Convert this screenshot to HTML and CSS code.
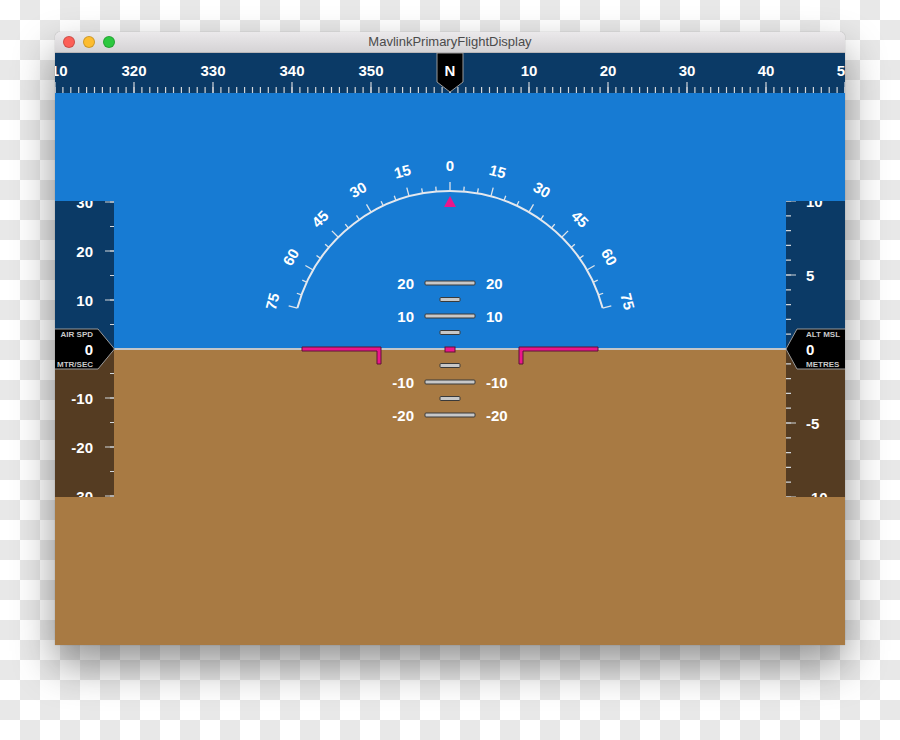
FILE: index.html
```html
<!DOCTYPE html>
<html>
<head>
<meta charset="utf-8">
<title>MavlinkPrimaryFlightDisplay</title>
<link rel="stylesheet" href="styles.css">
</head>
<body>
<div class="window">
  <div class="titlebar">
    <div class="lights">
      <span class="light red"></span>
      <span class="light yellow"></span>
      <span class="light green"></span>
    </div>
    <div class="title">MavlinkPrimaryFlightDisplay</div>
    <div></div>
  </div>
  <div class="pfd">
    <svg width="790" height="592" viewBox="55 53 790 592" xmlns="http://www.w3.org/2000/svg">
      <defs>
        <clipPath id="clipSpd"><rect x="55" y="201" width="59" height="296"/></clipPath>
        <clipPath id="clipAlt"><rect x="786" y="201" width="59" height="296"/></clipPath>
        <clipPath id="clipHdg"><rect x="55" y="53" width="790" height="40"/></clipPath>
        <line id="rollMinor" x1="450" y1="191" x2="450" y2="186"/>
        <line id="rollMajor" x1="450" y1="191" x2="450" y2="182"/>
      </defs>

      <!-- sky and ground -->
      <rect class="sky" x="55" y="53" width="790" height="296"/>
      <rect class="ground" x="55" y="349" width="790" height="296"/>
      <line class="horizon" x1="55" y1="349" x2="845" y2="349"/>

      <!-- roll arc -->
      <path class="arc" d="M297.4,308.1 A158,158 0 0 1 602.6,308.1"/>
      <g class="rollticks">
        <use href="#rollMajor" transform="rotate(-75 450 349)"/>
        <use href="#rollMinor" transform="rotate(-70 450 349)"/>
        <use href="#rollMinor" transform="rotate(-65 450 349)"/>
        <use href="#rollMajor" transform="rotate(-60 450 349)"/>
        <use href="#rollMinor" transform="rotate(-55 450 349)"/>
        <use href="#rollMinor" transform="rotate(-50 450 349)"/>
        <use href="#rollMajor" transform="rotate(-45 450 349)"/>
        <use href="#rollMinor" transform="rotate(-40 450 349)"/>
        <use href="#rollMinor" transform="rotate(-35 450 349)"/>
        <use href="#rollMajor" transform="rotate(-30 450 349)"/>
        <use href="#rollMinor" transform="rotate(-25 450 349)"/>
        <use href="#rollMinor" transform="rotate(-20 450 349)"/>
        <use href="#rollMajor" transform="rotate(-15 450 349)"/>
        <use href="#rollMinor" transform="rotate(-10 450 349)"/>
        <use href="#rollMinor" transform="rotate(-5 450 349)"/>
        <use href="#rollMajor"/>
        <use href="#rollMinor" transform="rotate(5 450 349)"/>
        <use href="#rollMinor" transform="rotate(10 450 349)"/>
        <use href="#rollMajor" transform="rotate(15 450 349)"/>
        <use href="#rollMinor" transform="rotate(20 450 349)"/>
        <use href="#rollMinor" transform="rotate(25 450 349)"/>
        <use href="#rollMajor" transform="rotate(30 450 349)"/>
        <use href="#rollMinor" transform="rotate(35 450 349)"/>
        <use href="#rollMinor" transform="rotate(40 450 349)"/>
        <use href="#rollMajor" transform="rotate(45 450 349)"/>
        <use href="#rollMinor" transform="rotate(50 450 349)"/>
        <use href="#rollMinor" transform="rotate(55 450 349)"/>
        <use href="#rollMajor" transform="rotate(60 450 349)"/>
        <use href="#rollMinor" transform="rotate(65 450 349)"/>
        <use href="#rollMinor" transform="rotate(70 450 349)"/>
        <use href="#rollMajor" transform="rotate(75 450 349)"/>
      </g>
      <g class="lbl mid">
        <text x="450" y="170.5" transform="rotate(-75 450 349)">75</text>
        <text x="450" y="170.5" transform="rotate(-60 450 349)">60</text>
        <text x="450" y="170.5" transform="rotate(-45 450 349)">45</text>
        <text x="450" y="170.5" transform="rotate(-30 450 349)">30</text>
        <text x="450" y="170.5" transform="rotate(-15 450 349)">15</text>
        <text x="450" y="170.5">0</text>
        <text x="450" y="170.5" transform="rotate(15 450 349)">15</text>
        <text x="450" y="170.5" transform="rotate(30 450 349)">30</text>
        <text x="450" y="170.5" transform="rotate(45 450 349)">45</text>
        <text x="450" y="170.5" transform="rotate(60 450 349)">60</text>
        <text x="450" y="170.5" transform="rotate(75 450 349)">75</text>
      </g>
      <polygon class="pink" points="450,196 444,207 456,207"/>

      <!-- pitch ladder -->
      <g class="bars">
        <rect x="425" y="281" width="50" height="4" rx="1"/>
        <rect x="440" y="297.5" width="20" height="4" rx="1"/>
        <rect x="425" y="314" width="50" height="4" rx="1"/>
        <rect x="440" y="330.5" width="20" height="4" rx="1"/>
        <rect x="440" y="363.5" width="20" height="4" rx="1"/>
        <rect x="425" y="380" width="50" height="4" rx="1"/>
        <rect x="440" y="396.5" width="20" height="4" rx="1"/>
        <rect x="425" y="413" width="50" height="4" rx="1"/>
      </g>
      <g class="lbl end">
        <text x="414" y="288.5">20</text>
        <text x="414" y="321.5">10</text>
        <text x="414" y="387.5">-10</text>
        <text x="414" y="420.5">-20</text>
      </g>
      <g class="lbl">
        <text x="486" y="288.5">20</text>
        <text x="486" y="321.5">10</text>
        <text x="486" y="387.5">-10</text>
        <text x="486" y="420.5">-20</text>
      </g>

      <!-- aircraft symbol -->
      <g class="pink">
        <path d="M302,347 H381 V364 H377 V351 H302 Z"/>
        <path d="M598,347 H519 V364 H523 V351 H598 Z"/>
        <rect x="445" y="347" width="10" height="5"/>
      </g>

      <!-- heading tape -->
      <rect class="tapeblue" x="55" y="53" width="790" height="40"/>
      <g clip-path="url(#clipHdg)">
        <line class="tick" x1="54.4" y1="90" x2="846" y2="90" stroke-width="6" stroke-dasharray="1.2 6.7"/>
        <line class="tick" x1="54.4" y1="87.5" x2="846" y2="87.5" stroke-width="11" stroke-dasharray="1.2 77.8"/>
        <g class="lbl mid">
          <text x="55" y="76">310</text>
          <text x="134" y="76">320</text>
          <text x="213" y="76">330</text>
          <text x="292" y="76">340</text>
          <text x="371" y="76">350</text>
          <text x="529" y="76">10</text>
          <text x="608" y="76">20</text>
          <text x="687" y="76">30</text>
          <text x="766" y="76">40</text>
          <text x="845" y="76">50</text>
        </g>
      </g>
      <path class="box" d="M437,53 V82 L450,92 L463,82 V53 Z"/>
      <text class="lbl mid" x="450" y="76">N</text>

      <!-- speed tape -->
      <rect class="tapeblue" x="55" y="201" width="59" height="148"/>
      <rect class="tapebrown" x="55" y="349" width="59" height="148"/>
      <g clip-path="url(#clipSpd)">
        <line class="tick" x1="112" y1="201.4" x2="112" y2="498" stroke-width="4" stroke-dasharray="1.2 23.3"/>
        <line class="tick" x1="109.5" y1="201.4" x2="109.5" y2="498" stroke-width="9" stroke-dasharray="1.2 47.8"/>
        <g class="lbl end">
          <text x="93" y="207.5">30</text>
          <text x="93" y="256.5">20</text>
          <text x="93" y="305.5">10</text>
          <text x="93" y="403.5">-10</text>
          <text x="93" y="452.5">-20</text>
          <text x="93" y="501.5">-30</text>
        </g>
      </g>
      <path class="box" d="M54,329 H98 L114.5,349 L98,369 H54 Z"/>
      <g class="small end">
        <text x="93" y="337">AIR SPD</text>
        <text x="93" y="366.5">MTR/SEC</text>
      </g>
      <text class="lbl end" x="93" y="354.5">0</text>

      <!-- altitude tape -->
      <rect class="tapeblue" x="786" y="201" width="59" height="148"/>
      <rect class="tapebrown" x="786" y="349" width="59" height="148"/>
      <g clip-path="url(#clipAlt)">
        <line class="tick" x1="788.5" y1="200.4" x2="788.5" y2="498" stroke-width="5" stroke-dasharray="1.2 13.6"/>
        <line class="tick" x1="791" y1="200.4" x2="791" y2="498" stroke-width="10" stroke-dasharray="1.2 72.8"/>
        <g class="lbl">
          <text x="806" y="206.5">10</text>
          <text x="806" y="280.5">5</text>
          <text x="806" y="428.5">-5</text>
          <text x="806" y="502.5">-10</text>
        </g>
      </g>
      <path class="box" d="M786,349 L797,329 H846 V369 H797 Z"/>
      <g class="small">
        <text x="806" y="337">ALT MSL</text>
        <text x="806" y="366.5">METRES</text>
      </g>
      <text class="lbl" x="806" y="354.5">0</text>
    </svg>
  </div>
</div>
</body>
</html>
```

FILE: styles.css
```css
html, body {
  margin: 0;
}

body {
  width: 900px;
  height: 740px;
  box-sizing: border-box;
  padding: 32px 0 0 55px;
  overflow: hidden;
  background-color: #ffffff;
  background-image: conic-gradient(#e8e8e8 25%, #ffffff 0 50%, #e8e8e8 0 75%, #ffffff 0);
  background-size: 40px 40px;
  font-family: "Liberation Sans", Arial, sans-serif;
}

.window {
  width: 790px;
  display: flex;
  flex-direction: column;
  border-radius: 5px 5px 0 0;
  overflow: hidden;
  box-shadow: 0 20px 42px rgba(0, 0, 0, 0.42), 0 0 1px rgba(0, 0, 0, 0.45);
}

.titlebar {
  height: 20px;
  border-bottom: 1px solid #b8b6b8;
  background: linear-gradient(#ebe9eb, #d5d3d5);
  display: grid;
  grid-template-columns: 1fr auto 1fr;
  align-items: center;
}

.lights {
  display: flex;
  gap: 8px;
  padding-left: 8px;
}

.light {
  width: 12px;
  height: 12px;
  border-radius: 50%;
  box-sizing: border-box;
  border: 0.5px solid rgba(0, 0, 0, 0.18);
}

.red { background: #fc5f57; }
.yellow { background: #fdbc2f; }
.green { background: #2cc83f; }

.title {
  font-size: 13px;
  color: #4b4b4b;
  line-height: 20px;
}

.pfd {
  height: 592px;
}

.pfd svg {
  display: block;
}

.sky { fill: #177bd3; }
.ground { fill: #a87a43; }
.horizon { stroke: #c3c6c9; stroke-width: 2; }
.tapeblue { fill: #0b3a66; }
.tapebrown { fill: #553c22; }

.arc {
  fill: none;
  stroke: #e4e8ee;
  stroke-width: 2;
}

.rollticks use {
  stroke: #dfe4ea;
  stroke-width: 1.3;
}

.tick {
  stroke: #d2d6da;
  fill: none;
}

.lbl {
  font-family: "Liberation Sans", Arial, sans-serif;
  font-weight: bold;
  font-size: 15px;
  fill: #ffffff;
}

.small {
  font-family: "Liberation Sans", Arial, sans-serif;
  font-weight: bold;
  font-size: 8px;
  fill: #c9c9c9;
}

.mid { text-anchor: middle; }
.end { text-anchor: end; }

.pink {
  fill: #ec168b;
  stroke: #5c1234;
  stroke-width: 1;
}

polygon.pink { stroke: none; }

.bars rect {
  fill: #c8c8c8;
  stroke: #3a3a3a;
  stroke-width: 1;
}

.box {
  fill: #000000;
  stroke: #9a9a9a;
  stroke-width: 1;
}
```
